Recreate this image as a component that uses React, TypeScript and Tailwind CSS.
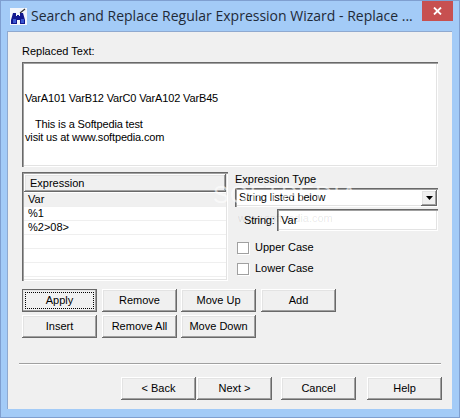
import type { ReactNode } from "react"

const raised =
  "bg-[#f0f0f0] shadow-[inset_-1px_-1px_0_#696969,inset_1px_1px_0_#fff,inset_-2px_-2px_0_#a0a0a0,inset_2px_2px_0_#e3e3e3]"
const sunken =
  "bg-white shadow-[inset_1px_1px_0_#696969,inset_2px_2px_0_#a0a0a0,inset_-1px_-1px_0_#fff,inset_-2px_-2px_0_#e3e3e3]"

function Btn({ children, focused, className = "" }: { children: ReactNode; focused?: boolean; className?: string }) {
  return (
    <div className={`relative h-[23px] w-[75px] flex items-center justify-center text-black ${raised} ${className}`}>
      {focused && (
        <>
          <div className="absolute inset-0 border border-[#696969]" />
          <div className="absolute inset-[3px] border border-dotted border-black" />
        </>
      )}
      <span className="relative">{children}</span>
    </div>
  )
}

function Check({ label }: { label: string }) {
  return (
    <div className="flex items-center h-[13px]">
      <div className="w-[12px] h-[12px] bg-white border border-[#a0a0a0] shadow-[1px_1px_0_#fff]" />
      <span className="ml-[6px] mt-[-1px]">{label}</span>
    </div>
  )
}

function Binoculars() {
  return (
    <svg width="17" height="17" viewBox="0 0 17 17">
      <rect width="17" height="17" fill="#f4f6fb" />
      <path d="M3 5h3v3h1v-1h2v1h1V5h3l2 7v4h-5v-4H7v4H1v-4z" fill="#12188f" />
      <path d="M3 11h3v4H3zM11 11h3v4h-3z" fill="#3a56d0" />
      <path d="M10 5l5-4" stroke="#333" strokeWidth="1.2" />
      <path d="M15 3l1-1" stroke="#eee" strokeWidth="1" />
    </svg>
  )
}

export default function App() {
  const rows = ["Var", "%1", "%2>08>", "", "", ""]
  return (
    <div className="relative w-[460px] h-[418px] overflow-hidden bg-[#a3cbf7] shadow-[inset_0_0_0_1px_#7f9fd0] font-['Liberation_Sans',sans-serif] text-[11px] leading-[13px] text-black">
      {/* title bar */}
      <div className="h-[31px] flex items-start pl-[10px]">
        <div className="mt-[8px] shrink-0">
          <Binoculars />
        </div>
        <div className="ml-[4px] mt-[6px] font-['Open_Sans',sans-serif] text-[14px] leading-[20px] whitespace-nowrap text-[#1f2a38]">
          Search and Replace Regular Expression Wizard - Replace ...
        </div>
        <div className="ml-auto mt-px mr-[7px] shrink-0 w-[31px] h-[20px] bg-[#c75050] flex items-center justify-center">
          <svg width="9" height="8" viewBox="0 0 9 8">
            <path d="M1 0.500l7 7M8 0.500l-7 7" stroke="#fff" strokeWidth="1.8" />
          </svg>
        </div>
      </div>

      {/* client area */}
      <div className="ml-[7px] w-[445px] h-[378px] bg-[#f0f0f0] border-t border-l border-[#8fa9cf] pl-[14px] pt-[13px]">
        <div className="h-[17px]">Replaced Text:</div>
        <div className={`w-[416px] h-[105px] pl-[3px] pt-[30px] tracking-[-0.15px] ${sunken}`}>
          <div>VarA101 VarB12 VarC0 VarA102 VarB45</div>
          <div className="mt-[13px] pl-[10px]">This is a Softpedia test</div>
          <div>visit us at www.softpedia.com</div>
        </div>

        <div className="flex mt-[5px]">
          <div className={`w-[206px] h-[109px] p-[2px] ${sunken}`}>
            <div className={`h-[18px] mb-px pl-[6px] flex items-center ${raised}`}>Expression</div>
            {rows.map((r, i) => (
              <div
                key={i}
                className={`h-[14px] pl-[4px] flex items-center border-b border-[#efefef] ${i === 0 ? "bg-[#f0f0f0]" : "bg-white"}`}
              >
                {r}
              </div>
            ))}
          </div>

          <div className="ml-[7px] w-[203px]">
            <div className="h-[16px] pt-px">Expression Type</div>
            <div className={`h-[19px] flex items-center pl-[4px] tracking-[-0.15px] ${sunken}`}>
              <span>String listed below</span>
              <div className={`ml-auto mr-[1px] w-[16px] h-[16px] flex items-center justify-center ${raised}`}>
                <svg width="7" height="4" viewBox="0 0 7 4">
                  <path d="M0 0h7L3.500 4z" fill="#000" />
                </svg>
              </div>
            </div>
            <div className="flex items-center mt-[2px]">
              <span className="ml-[9px] w-[33px] tracking-[-0.15px] pt-px">String:</span>
              <div className={`w-[161px] h-[22px] pl-[4px] flex items-center ${sunken}`}>Var</div>
            </div>
            <div className="ml-[2px] mt-[10px] flex flex-col gap-[8px]">
              <Check label="Upper Case" />
              <Check label="Lower Case" />
            </div>
          </div>
        </div>

        <div className="mt-[8px] grid grid-cols-[80px_79px_80px_75px] gap-y-[3px] w-[314px]">
          <Btn focused>Apply</Btn>
          <Btn>Remove</Btn>
          <Btn>Move Up</Btn>
          <Btn>Add</Btn>
          <Btn>Insert</Btn>
          <Btn>Remove All</Btn>
          <Btn>Move Down</Btn>
        </div>

        <div className="ml-[-3px] mt-[25px] w-[422px] h-[2px] bg-[#a0a0a0] border-b border-white" />

        <div className="flex mt-[12px] ml-[99px]">
          <Btn>&lt; Back</Btn>
          <Btn className="ml-px">Next &gt;</Btn>
          <Btn className="ml-[9px]">Cancel</Btn>
          <Btn className="ml-[11px]">Help</Btn>
        </div>
      </div>

      {/* softpedia watermark */}
      <div className="absolute left-[213px] top-[183px] text-[24px] leading-[24px] tracking-[1px] text-white/60 whitespace-nowrap pointer-events-none">
        SOFTPEDIA
      </div>
      <div className="absolute left-[238px] top-[212px] text-[11px] text-black/10 whitespace-nowrap pointer-events-none">
        www.softpedia.com
      </div>
    </div>
  )
}
